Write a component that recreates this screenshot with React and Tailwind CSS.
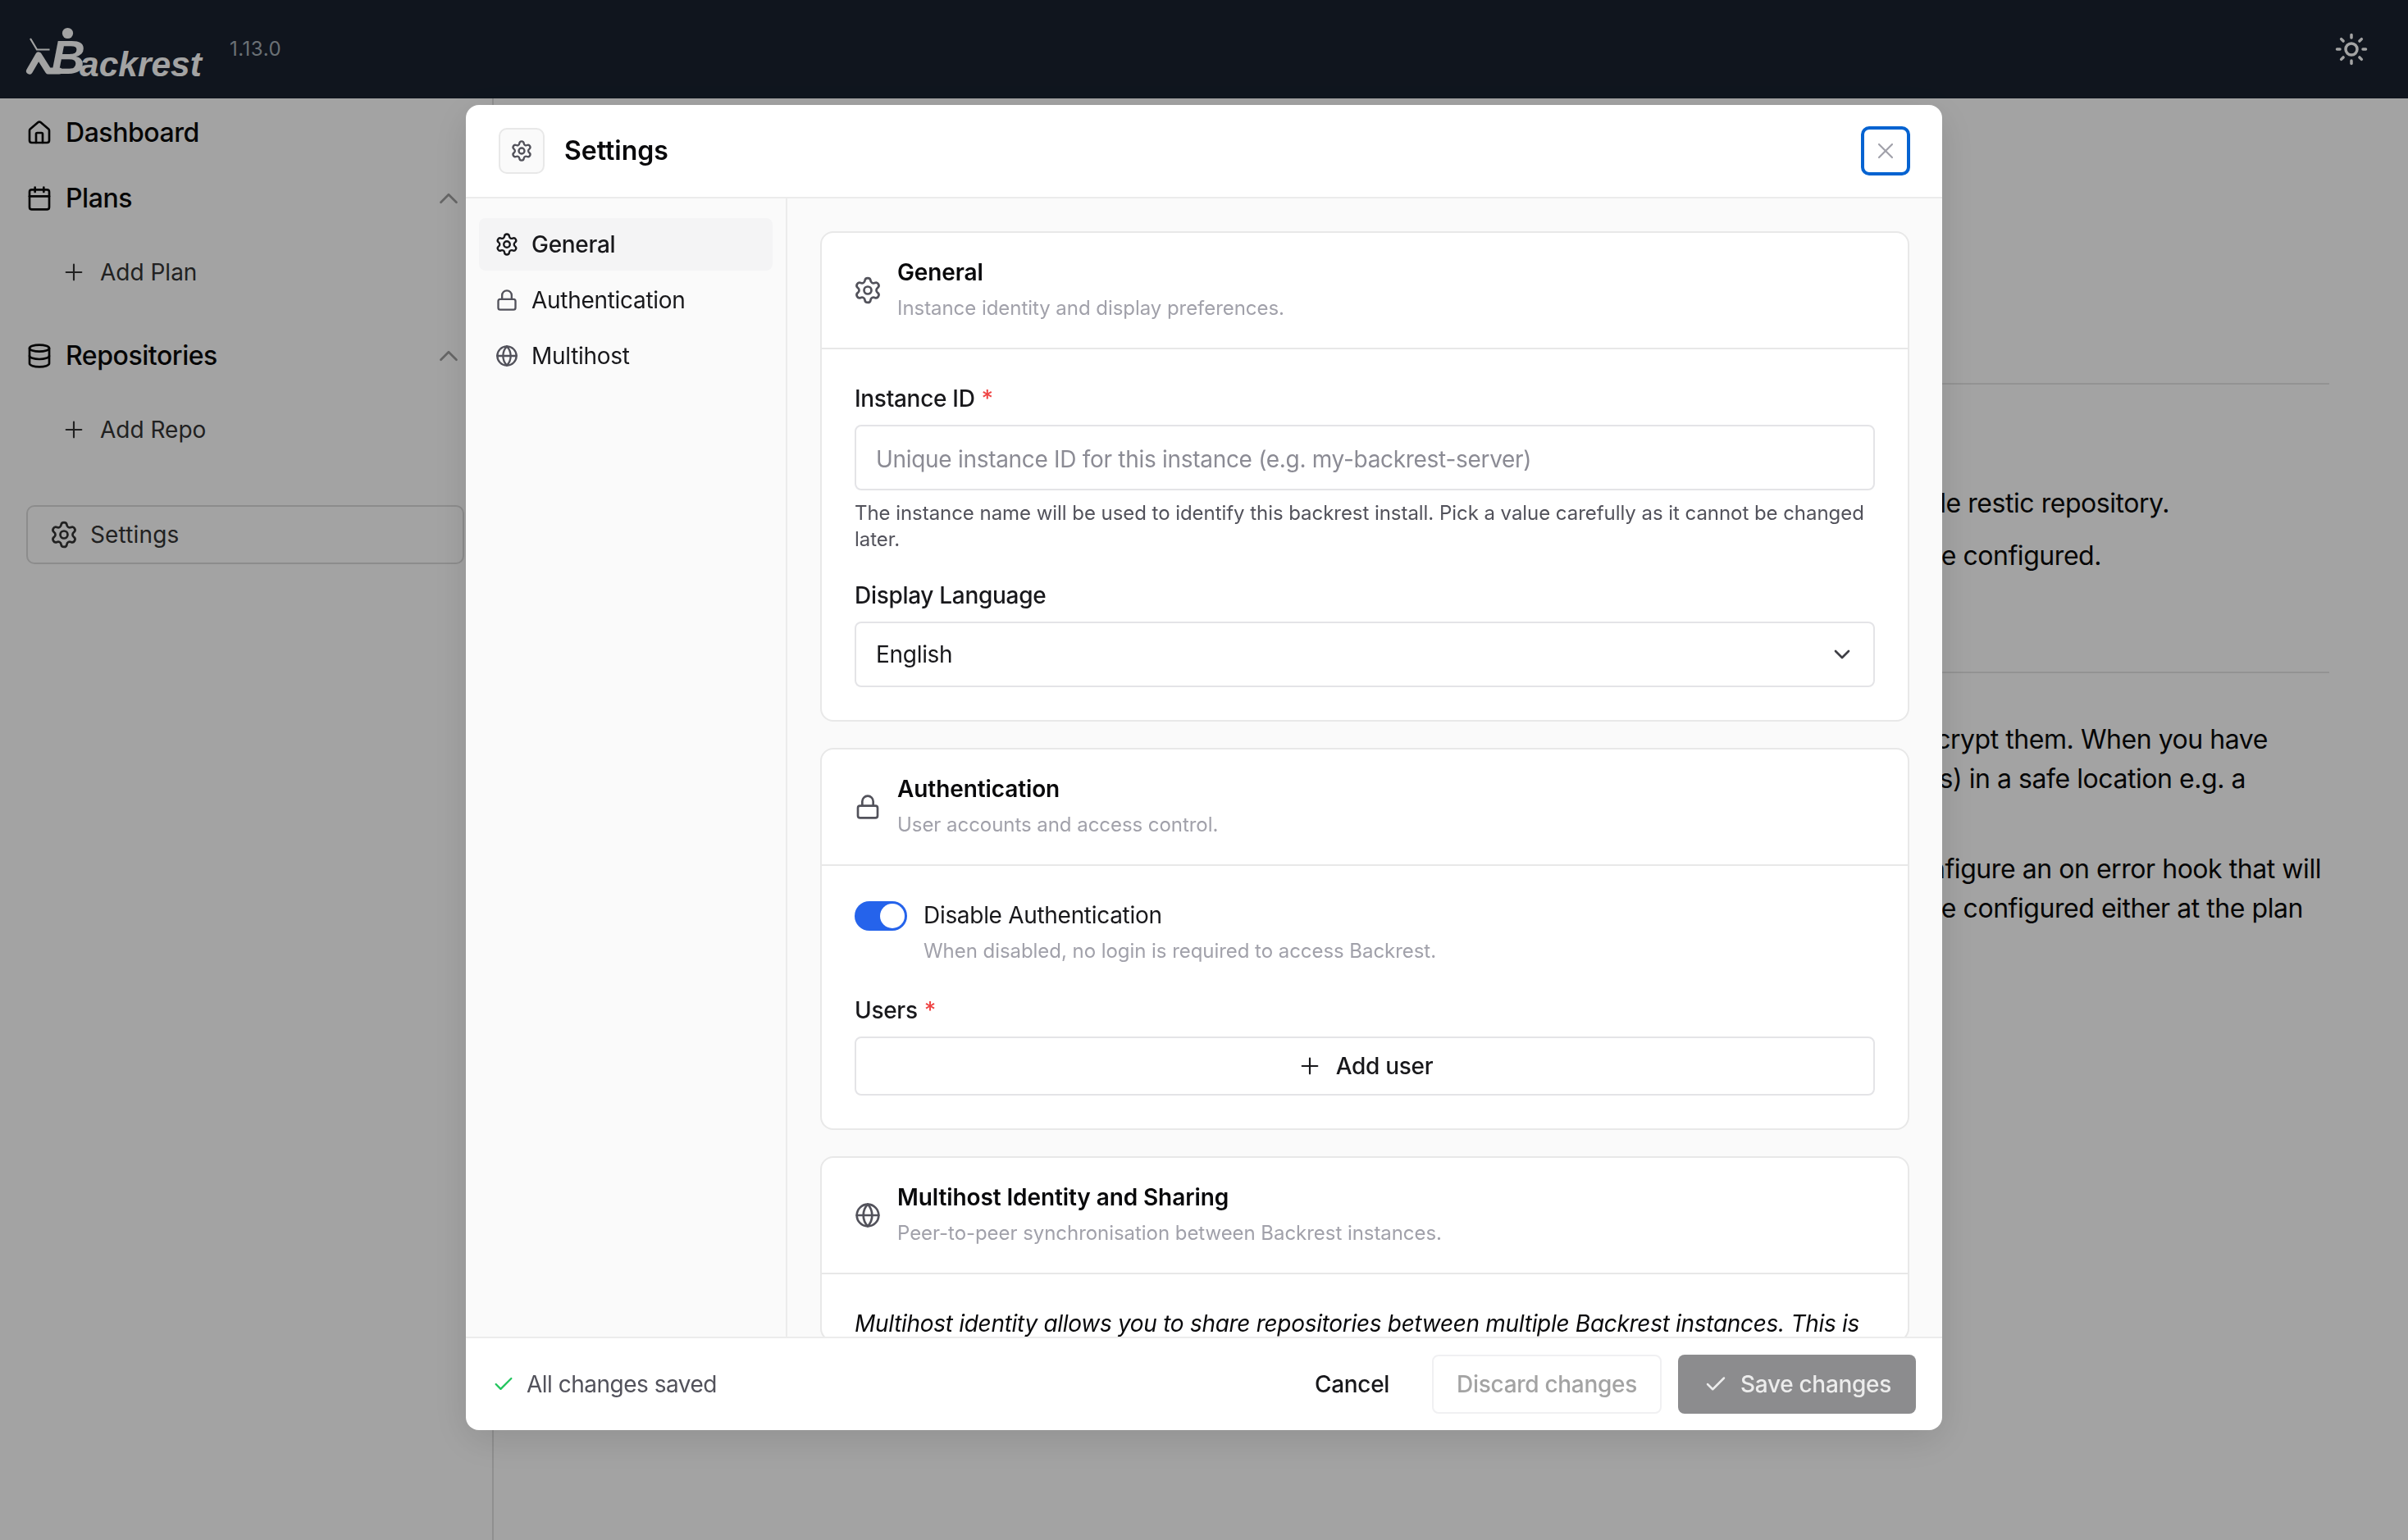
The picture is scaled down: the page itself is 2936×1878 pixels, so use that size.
import React from 'react';
import {
  Calendar,
  Check,
  ChevronDown,
  ChevronUp,
  Database,
  Globe,
  House,
  Lock,
  Plus,
  Settings,
  Sun,
  X,
} from 'lucide-react';

const NAV_ITEMS = [
  { label: 'General', icon: Settings, active: true },
  { label: 'Authentication', icon: Lock },
  { label: 'Multihost', icon: Globe },
];

function Logo() {
  return (
    <svg width="224" height="72" viewBox="30 24 224 72" className="shrink-0 text-[#ffffff]" aria-label="Backrest">
      <circle cx="82.5" cy="40.5" r="6.6" fill="currentColor" />
      <path d="M37 47 L45 60.5 H60.5" fill="none" stroke="currentColor" strokeWidth="2.2" />
      <path d="M36 86.5 L47 67.5 L59 86.5 H72" fill="none" stroke="currentColor" strokeWidth="8" strokeLinecap="round" strokeLinejoin="round" />
      <text fill="currentColor" fontFamily="Liberation Sans" fontWeight="700" fontStyle="italic">
        <tspan x="62" y="90" fontSize="58">B</tspan>
        <tspan x="97" y="93" fontSize="42.5">ackrest</tspan>
      </text>
    </svg>
  );
}

function Sidebar() {
  return (
    <aside className="w-[602px] shrink-0 border-r-2 border-[#e0e0e0] pl-8 pr-[34px]">
      <div className="flex h-20 items-center gap-4 pt-1 text-[32px] font-medium tracking-[-0.45px] text-[#0a0a0a]">
        <House size={32} strokeWidth={2} />
        Dashboard
      </div>
      <div className="flex h-20 items-center gap-4 pt-1 text-[32px] font-medium tracking-[-0.45px] text-[#0a0a0a]">
        <Calendar size={32} strokeWidth={2} />
        <span className="flex-1">Plans</span>
        <ChevronUp size={38} strokeWidth={1.7} className="text-[#a0a0a0]" />
      </div>
      <div className="mt-3 flex h-20 items-center gap-4 pl-[42px] text-[28px] text-[#353535]">
        <Plus size={32} strokeWidth={1.6} />
        Add Plan
      </div>
      <div className="mt-5 flex h-20 items-center gap-4 pt-1 text-[32px] font-medium tracking-[-0.45px] text-[#0a0a0a]">
        <Database size={32} strokeWidth={2} />
        <span className="flex-1">Repositories</span>
        <ChevronUp size={38} strokeWidth={1.7} className="text-[#a0a0a0]" />
      </div>
      <div className="mt-3 flex h-20 items-center gap-4 pl-[42px] text-[28px] text-[#353535]">
        <Plus size={32} strokeWidth={1.6} />
        Add Repo
      </div>
      <button type="button" className="mt-[52px] flex h-[72px] w-full items-center gap-4 rounded-[10px] border-2 border-[#dcdcdc] pl-[26px] text-[28px] tracking-[0.15px] text-[#353535]">
        <Settings size={36} strokeWidth={1.8} className="-mr-0.5" />
        Settings
      </button>
    </aside>
  );
}

function MainContent() {
  return (
    <main className="flex-1 pl-10 pr-24 pt-[347px] text-[32px] leading-[48px] tracking-[-0.45px] text-[#0a0a0a]">
      <div className="h-0.5 bg-[#e6e6e6]" />
      <div className="mt-[121px] flex justify-end pr-[195px]">a single restic repository.</div>
      <div className="mt-4 flex justify-end pr-[278px]">can be configured.</div>
      <div className="mt-[117px] h-0.5 bg-[#e6e6e6]" />
      <div className="mt-[57px] flex justify-end pr-[75px]">to decrypt them. When you have</div>
      <div className="flex justify-end pr-[102px]">passwords) in a safe location e.g. a</div>
      <div className="mt-[62px] flex justify-end pr-2.5">you configure an on error hook that will</div>
      <div className="flex justify-end pr-8">Hooks can be configured either at the plan</div>
    </main>
  );
}

function CardHeader({ icon: Icon, iconSize = 32, iconClass = '', title, subtitle }) {
  return (
    <div className="flex h-[142px] items-center gap-5 border-b-2 border-[#e8e8e8] px-10">
      <Icon size={iconSize} strokeWidth={iconSize === 36 ? 1.8 : 2} className={`shrink-0 text-[#52525b] ${iconClass}`} />
      <div className="-mt-1">
        <div className="text-[28px] font-semibold leading-10 tracking-[-0.1px] text-[#09090b]">{title}</div>
        <div className="mt-2 text-2xl leading-8 tracking-[-0.05px] text-[#a1a1aa]">{subtitle}</div>
      </div>
    </div>
  );
}

function FieldLabel({ children, required }) {
  return (
    <div className="text-[28px] font-medium leading-10 text-[#18181b]">
      {children}
      {required && <span className="ml-2 text-[#ef4444]">*</span>}
    </div>
  );
}

function SettingsModal() {
  return (
    <div className="flex h-[1616px] w-[1800px] flex-col overflow-hidden rounded-2xl bg-white tracking-[-0.3px] shadow-[0_12px_48px_rgba(0,0,0,0.12)]">
      <div className="flex h-[114px] shrink-0 items-center justify-between border-b-2 border-[#ececec] pl-10 pr-[39px]">
        <div className="flex items-center gap-6">
          <div className="flex h-14 w-14 items-center justify-center rounded-[10px] border-2 border-[#e8e8e8] bg-[#fafafa]">
            <Settings size={28} strokeWidth={2} className="text-[#52525b]" />
          </div>
          <h2 className="text-[32px] font-semibold tracking-normal text-[#09090b]">Settings</h2>
        </div>
        <button type="button" className="flex h-[60px] w-[60px] items-center justify-center rounded-[10px] border-4 border-[#0563d1] text-[#a1a1aa]">
          <X size={32} strokeWidth={1.6} />
        </button>
      </div>

      <div className="flex min-h-0 flex-1">
        <nav className="flex w-[392px] shrink-0 flex-col gap-1 border-r-2 border-[#ececec] bg-[#fafafa] px-4 pt-6">
          {NAV_ITEMS.map((item) => (
            <div
              key={item.label}
              className={`flex h-16 items-center gap-4 rounded-lg px-5 text-[28px] text-[#18181b] ${item.active ? 'bg-[#f4f4f5] font-medium' : ''}`}
            >
              <item.icon size={item.active ? 30 : 28} strokeWidth={item.active ? 1.9 : 2} className={item.active ? '-mx-px text-[#18181b]' : 'text-[#52525b]'} />
              {item.label}
            </div>
          ))}
        </nav>

        <div className="flex min-w-0 flex-1 flex-col gap-8 overflow-hidden bg-[#fafafa] px-10 pt-10">
          <section className="shrink-0 rounded-2xl border-2 border-[#e8e8e8] bg-white">
            <CardHeader icon={Settings} iconSize={36} iconClass="-mx-0.5" title="General" subtitle="Instance identity and display preferences." />
            <div className="px-10 pb-10 pt-10">
              <FieldLabel required>Instance ID</FieldLabel>
              <input
                readOnly
                placeholder="Unique instance ID for this instance (e.g. my-backrest-server)"
                className="mt-3 h-20 w-full rounded-lg border-2 border-[#e4e4e7] bg-white px-6 pt-1 text-[28px] outline-none placeholder:text-[#8b8b94]"
              />
              <p className="mt-3 text-2xl leading-8 tracking-[-0.05px] text-[#52525b]">
                The instance name will be used to identify this backrest install. Pick a value carefully as it cannot be changed later.
              </p>
              <div className="mt-8">
                <FieldLabel>Display Language</FieldLabel>
              </div>
              <div className="mt-3 flex h-20 items-center justify-between rounded-lg border-2 border-[#e4e4e7] pl-6 pr-[22px] text-[28px] text-[#18181b]">
                English
                <ChevronDown size={32} strokeWidth={2} className="text-[#3f3f46]" />
              </div>
            </div>
          </section>

          <section className="shrink-0 rounded-2xl border-2 border-[#e8e8e8] bg-white">
            <CardHeader icon={Lock} title="Authentication" subtitle="User accounts and access control." />
            <div className="px-10 pb-10 pt-10">
              <div className="flex gap-5">
                <div className="mt-[3px] flex h-9 w-16 shrink-0 items-center justify-end rounded-full bg-[#2563eb] px-[3px]">
                  <div className="h-[30px] w-[30px] rounded-full bg-white" />
                </div>
                <div>
                  <div className="text-[28px] leading-10 text-[#18181b]">Disable Authentication</div>
                  <div className="mt-2 text-2xl leading-8 tracking-[-0.05px] text-[#a1a1aa]">When disabled, no login is required to access Backrest.</div>
                </div>
              </div>
              <div className="mt-9">
                <FieldLabel required>Users</FieldLabel>
              </div>
              <button type="button" className="mt-3 flex h-[72px] w-full items-center justify-center gap-4 rounded-lg border-2 border-[#e4e4e7] text-[28px] font-medium text-[#18181b]">
                <Plus size={32} strokeWidth={1.6} />
                Add user
              </button>
            </div>
          </section>

          <section className="shrink-0 rounded-2xl border-2 border-[#e8e8e8] bg-white">
            <CardHeader icon={Globe} title="Multihost Identity and Sharing" subtitle="Peer-to-peer synchronisation between Backrest instances." />
            <div className="px-10 pt-10">
              <p className="text-[28px] italic leading-10 text-[#09090b]">
                Multihost identity allows you to share repositories between multiple Backrest instances. This is
              </p>
            </div>
          </section>
        </div>
      </div>

      <div className="flex h-[114px] shrink-0 items-center justify-between border-t-2 border-[#ececec] pl-8 pr-8">
        <div className="flex items-center gap-3.5 text-[28px] tracking-[-0.5px] text-[#52525b]">
          <Check size={28} strokeWidth={2} className="text-[#22c55e]" />
          All changes saved
        </div>
        <div className="flex items-center gap-5">
          <button type="button" className="h-[72px] px-8 text-[28px] font-medium text-[#18181b]">Cancel</button>
          <button type="button" className="h-[72px] rounded-lg border-2 border-[#f0f0f2] px-7 text-[28px] font-medium text-[#a3a3a3]">Discard changes</button>
          <button type="button" className="flex h-[72px] items-center gap-[15px] rounded-lg bg-[#8c8c8e] pl-[31px] pr-[30px] text-[28px] font-medium text-[#ececec]">
            <Check size={30} strokeWidth={2} />
            Save changes
          </button>
        </div>
      </div>
    </div>
  );
}

export default function App() {
  return (
    <div className="flex h-screen flex-col overflow-hidden bg-white font-[Inter,sans-serif]">
      <header className="flex h-[120px] shrink-0 items-center justify-between bg-[#192230] pl-[30px] pr-12">
        <div className="flex items-center">
          <Logo />
          <span className="ml-[26px] text-2xl tracking-[0.5px] text-[#a7afb7]">1.13.0</span>
        </div>
        <Sun size={42} strokeWidth={2} className="text-white" />
      </header>
      <div className="flex min-h-0 flex-1">
        <Sidebar />
        <MainContent />
      </div>

      {/* mask + dialog */}
      <div className="fixed inset-0 flex justify-center bg-[rgba(0,0,0,0.36)] pt-32">
        <SettingsModal />
      </div>
    </div>
  );
}
